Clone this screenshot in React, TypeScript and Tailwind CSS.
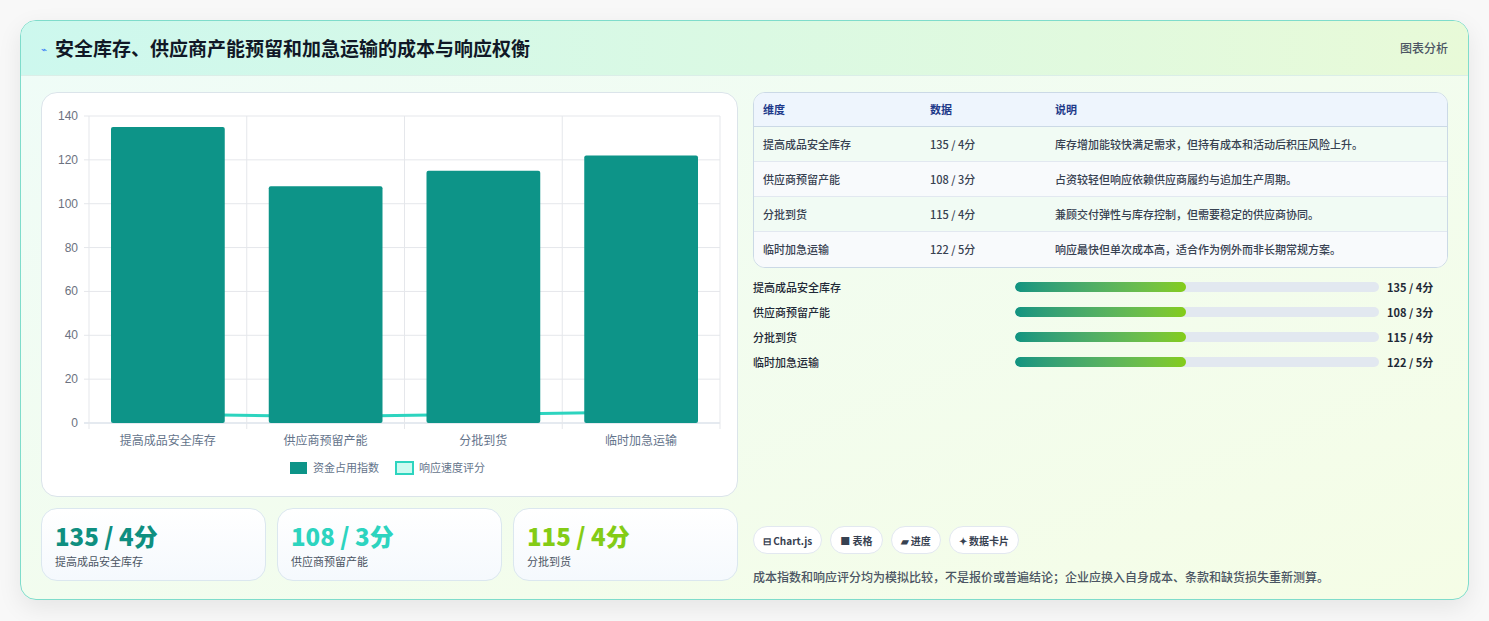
import React from "react";

const F = { fontFamily: '"Noto Sans CJK SC","Noto Sans",sans-serif' };
const rows = [
  { n: "提高成品安全库存", v: 135, s: 4, d: "库存增加能较快满足需求，但持有成本和活动后积压风险上升。" },
  { n: "供应商预留产能", v: 108, s: 3, d: "占资较轻但响应依赖供应商履约与追加生产周期。" },
  { n: "分批到货", v: 115, s: 4, d: "兼顾交付弹性与库存控制，但需要稳定的供应商协同。" },
  { n: "临时加急运输", v: 122, s: 5, d: "响应最快但单次成本高，适合作为例外而非长期常规方案。" },
];

function Chart() {
  const x0 = 47, x1 = 678, y0 = 330, yt = 23;
  const sc = (v: number) => y0 - (v / 140) * (y0 - yt);
  const cw = (x1 - x0) / 4;
  const pts = rows.map((r, i) => `${x0 + cw * i + cw / 2},${sc(r.s)}`).join(" ");
  return (
    <svg width="697" height="404" className="block">
      {[0, 20, 40, 60, 80, 100, 120, 140].map((t) => (
        <g key={t}>
          <line x1={x0 - 5} x2={x1} y1={sc(t)} y2={sc(t)} stroke={t === 0 ? "#cbd5e1" : "#e5e7eb"} />
          <text x={x0 - 11} y={sc(t) + 4} textAnchor="end" fontSize="12" fill="#6b7280" fontFamily="Liberation Sans">{t}</text>
        </g>
      ))}
      {[0, 1, 2, 3, 4].map((i) => (
        <line key={i} x1={x0 + cw * i} x2={x0 + cw * i} y1={yt} y2={y0 + 6} stroke="#e5e7eb" />
      ))}
      <polyline points={pts} fill="none" stroke="#2dd4bf" strokeWidth="3" />
      {rows.map((r, i) => (
        <g key={i}>
          <rect x={x0 + cw * i + 22} y={sc(r.v)} width={cw - 44} height={y0 - sc(r.v)} rx="2" fill="#0d9488" />
          <text x={x0 + cw * i + cw / 2} y={y0 + 22} textAnchor="middle" fontSize="12" fill="#64748b" style={F}>{r.n}</text>
        </g>
      ))}
      <rect x="248" y="369" width="17" height="12" fill="#0d9488" />
      <text x="271" y="379" fontSize="11" fill="#64748b" style={F}>资金占用指数</text>
      <rect x="354" y="369" width="17" height="12" fill="#ccfbf1" stroke="#2dd4bf" strokeWidth="2" />
      <text x="377" y="379" fontSize="11" fill="#64748b" style={F}>响应速度评分</text>
    </svg>
  );
}

export default function App() {
  const colors = ["text-[#0f8f80]", "text-[#2dd4bf]", "text-[#84cc16]"];
  return (
    <div style={F} className="w-[1489px] h-[621px] bg-[#f8f8f8] pt-5 px-5">
      <div className="w-[1449px] h-[580px] rounded-2xl border border-[#7fdccb] overflow-hidden shadow-[0_8px_24px_rgba(0,0,0,0.08)] bg-gradient-to-br from-[#effcf8] to-[#f5fde6]">
        <div className="h-[55px] flex items-center justify-between px-5 border-b border-[#dbeee8] bg-gradient-to-r from-[#cdf8ee] to-[#e8fad8]">
          <div className="flex items-center gap-2">
            <span className="text-[#3b82f6] text-[10px]">⌁</span>
            <span className="text-[19px] font-bold text-[#111827]">安全库存、供应商产能预留和加急运输的成本与响应权衡</span>
          </div>
          <span className="text-[12px] text-[#4b5563] font-medium">图表分析</span>
        </div>
        <div className="flex gap-[15px] px-5 pt-4">
          <div className="w-[697px] flex flex-col gap-[11px]">
            <div className="h-[405px] bg-white rounded-2xl border border-[#dbe4ea]">
              <Chart />
            </div>
            <div className="grid grid-cols-3 gap-[11px]">
              {rows.slice(0, 3).map((r, i) => (
                <div key={i} className="h-[73px] rounded-2xl border border-[#dbe7ef] bg-gradient-to-b from-white to-[#f5f9fd] px-[13px] pt-[10px]">
                  <div className={`text-[24px] font-extrabold leading-[34px] ${colors[i]}`}>{r.v} / {r.s}分</div>
                  <div className="text-[11px] text-[#4b5563]">{r.n}</div>
                </div>
              ))}
            </div>
          </div>
          <div className="w-[697px] flex flex-col">
            <div className="rounded-xl border border-[#cbd9e6] overflow-hidden bg-white">
              <div className="grid grid-cols-[167px_125px_1fr] h-[34px] items-center px-[9px] bg-[#eef5fd] border-b border-[#cbd9e6] text-[11px] font-bold text-[#1e3a8a]">
                <span>维度</span><span>数据</span><span>说明</span>
              </div>
              {rows.map((r, i) => (
                <div key={i} className={`grid grid-cols-[167px_125px_1fr] h-[35px] items-center px-[9px] text-[11px] text-[#374151] font-medium ${i < 3 ? "border-b border-[#e2e8f0]" : ""} ${i % 2 ? "bg-[#f8fafc]" : "bg-[#f1fbf4]"}`}>
                  <span>{r.n}</span><span>{r.v} / {r.s}分</span><span>{r.d}</span>
                </div>
              ))}
            </div>
            <div className="flex flex-col gap-[11px] mt-[12px]">
              {rows.map((r, i) => (
                <div key={i} className="flex items-center h-[14px] text-[11px]">
                  <span className="w-[262px] text-[#1f2937] font-medium">{r.n}</span>
                  <div className="w-[364px] h-[10px] rounded-full bg-[#e2e8f0] overflow-hidden">
                    <div className="w-[171px] h-full rounded-full bg-gradient-to-r from-[#0f9480] to-[#84cc16]" />
                  </div>
                  <span className="ml-2 font-bold text-[#1f2937]">{r.v} / {r.s}分</span>
                </div>
              ))}
            </div>
            <div className="flex gap-[8px] mt-[157px]">
              {["⊟ Chart.js", "■ 表格", "▰ 进度", "✦ 数据卡片"].map((c) => (
                <span key={c} className="h-[28px] px-[9px] flex items-center rounded-full border border-[#e2e8f0] bg-white text-[10px] font-bold text-[#374151]">{c}</span>
              ))}
            </div>
            <div className="mt-[14px] text-[12px] text-[#4b5563] font-medium">成本指数和响应评分均为模拟比较，不是报价或普遍结论；企业应换入自身成本、条款和缺货损失重新测算。</div>
          </div>
        </div>
      </div>
    </div>
  );
}
